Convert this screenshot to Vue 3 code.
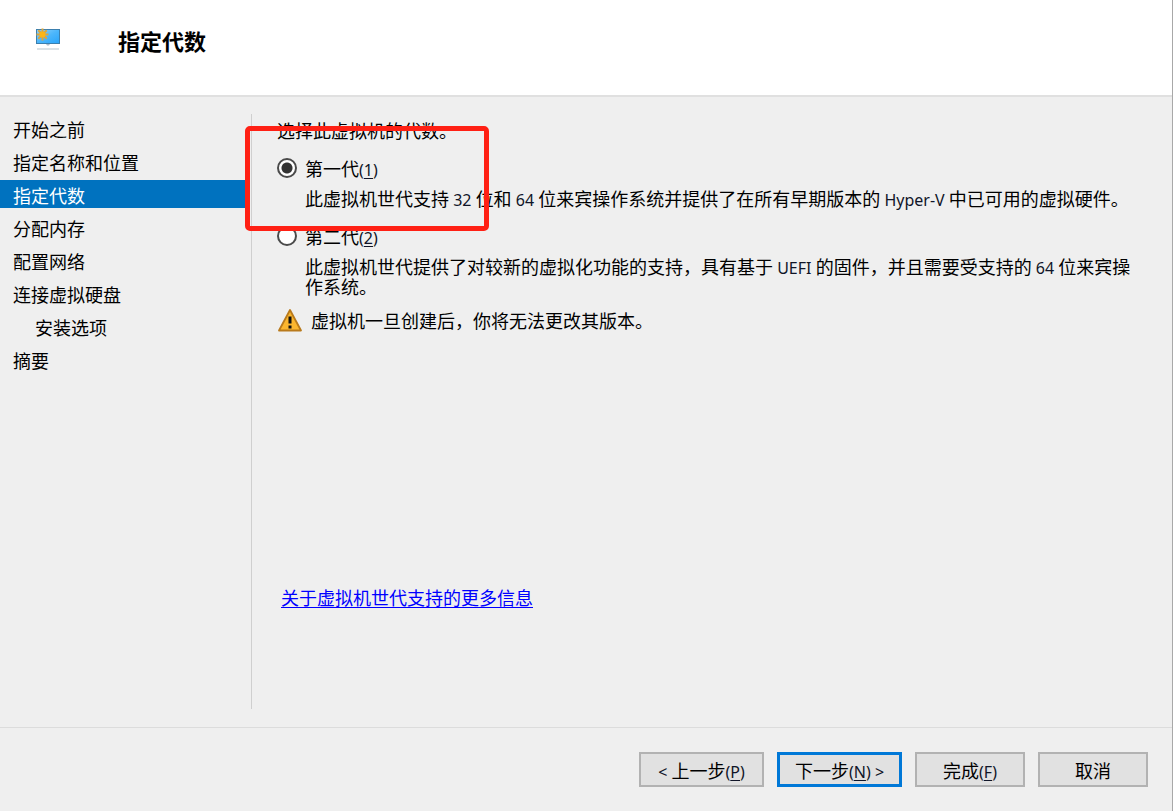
<script setup>
import { ref } from 'vue'

const steps = [
  { label: '开始之前' },
  { label: '指定名称和位置' },
  { label: '指定代数', current: true },
  { label: '分配内存' },
  { label: '配置网络' },
  { label: '连接虚拟硬盘' },
  { label: '安装选项', nested: true },
  { label: '摘要' },
]

const generation = ref('1')
</script>

<template>
  <div class="wizard">
    <header class="header">
      <svg class="logo" viewBox="0 0 26 24" aria-hidden="true">
        <defs>
          <linearGradient id="screen" x1="0" y1="0" x2="1" y2="1">
            <stop offset="0" stop-color="#8fd0f8" />
            <stop offset="0.5" stop-color="#4cb6fb" />
            <stop offset="1" stop-color="#2aa5fa" />
          </linearGradient>
        </defs>
        <rect x="1" y="2" width="24" height="15" fill="#3b7fae" />
        <rect x="2" y="3" width="22" height="13" fill="url(#screen)" />
        <path d="M11 17h4l-1 1.500h-2z" fill="#a9bccb" />
        <path d="M2 22h22" stroke="#c3ced6" stroke-width="1.200" />
        <path
          d="M7.500 1.500v12M1.500 7.500h12M3.300 3.300l8.400 8.400M11.700 3.300l-8.400 8.400"
          stroke="#dda63c"
          stroke-width="2"
        />
        <circle cx="7.500" cy="7.500" r="3" fill="#fdb515" />
      </svg>
      <h1 class="title">指定代数</h1>
    </header>

    <div class="body">
      <nav class="sidebar">
        <ul class="steps">
          <li
            v-for="step in steps"
            :key="step.label"
            class="step"
            :class="{ current: step.current, nested: step.nested }"
            :aria-current="step.current ? 'step' : undefined"
          >
            {{ step.label }}
          </li>
        </ul>
      </nav>

      <main class="content">
        <fieldset class="choices">
          <legend class="prompt">选择此虚拟机的代数。</legend>
          <div class="choice">
            <input id="gen1" v-model="generation" class="radio" type="radio" name="generation" value="1" />
            <label for="gen1">第一代<span class="latin">(<u>1</u>)</span></label>
          </div>
          <p class="note">此虚拟机世代支持<span class="latin"> 32 </span>位和<span class="latin"> 64 </span>位来宾操作系统并提供了在所有早期版本的<span class="latin"> Hyper-V </span>中已可用的虚拟硬件。</p>
          <div class="choice">
            <input id="gen2" v-model="generation" class="radio" type="radio" name="generation" value="2" />
            <label for="gen2">第二代<span class="latin">(<u>2</u>)</span></label>
          </div>
          <p class="note">此虚拟机世代提供了对较新的虚拟化功能的支持，具有基于<span class="latin"> UEFI </span>的固件，并且需要受支持的<span class="latin"> 64 </span>位来宾操作系统。</p>
        </fieldset>

        <p class="warning">
          <svg class="warning-icon" viewBox="0 0 26 24" aria-hidden="true">
            <path d="M13 2L24 22.500h-22z" fill="#fbb62f" stroke="#b97a1c" stroke-width="1.800" stroke-linejoin="round" />
            <path d="M13 8.500v7M13 17.500v3" stroke="#111" stroke-width="3" />
          </svg>
          <span>虚拟机一旦创建后，你将无法更改其版本。</span>
        </p>

        <a class="more" href="#">关于虚拟机世代支持的更多信息</a>
        <div class="highlight" aria-hidden="true"></div>
      </main>
    </div>

    <footer class="footer">
      <button type="button" class="button wide"><span class="latin">&lt; </span>上一步<span class="latin">(<u>P</u>)</span></button>
      <button type="button" class="button wide primary">下一步<span class="latin">(<u>N</u>) &gt;</span></button>
      <button type="button" class="button">完成<span class="latin">(<u>F</u>)</span></button>
      <button type="button" class="button">取消</button>
    </footer>
  </div>
</template>

<style>
body {
  margin: 0;
}
</style>

<style scoped>
.wizard {
  box-sizing: border-box;
  display: flex;
  flex-direction: column;
  min-height: 100vh;
  border-right: 1px solid #a8a8a8;
  background: #efefef;
  color: #000;
  font-family: "Noto Sans CJK SC", "Noto Sans", sans-serif;
  font-size: 18px;
  line-height: 20px;
}

.latin {
  color: #101528;
  font-family: "Noto Sans", sans-serif;
  font-size: 16px;
  line-height: 16px;
}

u {
  text-underline-offset: 2px;
}

.header {
  display: flex;
  align-items: flex-start;
  gap: 57px;
  height: 95px;
  padding-left: 35px;
  border-bottom: 2px solid #e0e0e0;
  background: #fff;
}

.logo {
  width: 26px;
  height: 24px;
  margin-top: 27px;
}

.title {
  margin: 26px 0 0;
  font-size: 22px;
  font-weight: 700;
  line-height: 28px;
}

.body {
  display: flex;
  flex: 1;
  gap: 6px;
  padding: 17px 32px 18px 0;
}

.sidebar {
  width: 245px;
  flex-shrink: 0;
}

.steps {
  display: flex;
  flex-direction: column;
  gap: 5px;
  margin: 0;
  padding: 0;
  list-style: none;
}

.step {
  padding-top: 2px;
  padding-left: 13px;
  line-height: 26px;
}

.step.nested {
  padding-left: 35px;
}

.step.current {
  background: #0072bf;
  color: #fff;
}

.content {
  position: relative;
  flex: 1;
  padding: 6px 0 0 25px;
  border-left: 1px solid #cfcfcf;
}

.choices {
  min-width: 0;
  margin: 0;
  padding: 0;
  border: 0;
}

.prompt {
  padding: 0;
}

.choice {
  display: flex;
  align-items: center;
  gap: 8px;
  margin-top: 18px;
}

.radio {
  appearance: none;
  box-sizing: border-box;
  width: 20px;
  height: 20px;
  margin: 0;
  border: 2px solid #4a4a4a;
  border-radius: 50%;
  background: #fff;
}

.radio:checked {
  background: radial-gradient(circle, #333 5px, #fff 6px);
}

.note {
  margin: 10px 0 0 28px;
}

.warning {
  display: flex;
  align-items: center;
  gap: 8px;
  margin: 12px 0 0;
}

.warning-icon {
  width: 26px;
  height: 24px;
}

.more {
  display: inline-block;
  margin: 255px 0 0 4px;
  color: #00f;
  text-underline-offset: 2px;
}

.highlight {
  position: absolute;
  top: 12px;
  left: -7px;
  box-sizing: border-box;
  width: 244px;
  height: 105px;
  border: 5px solid #ff2014;
  border-radius: 5px;
  pointer-events: none;
}

.footer {
  display: flex;
  justify-content: flex-end;
  gap: 13px;
  padding: 24px 24px;
  border-top: 1px solid #dcdcdc;
}

.button {
  box-sizing: border-box;
  width: 110px;
  height: 35px;
  padding: 0;
  border: 2px solid #b2b2b2;
  background: #e1e1e1;
  color: #000;
  font: inherit;
  white-space: pre;
}

.button.wide {
  width: 125px;
}

.button.primary {
  border: 3px solid #0078d7;
}
</style>
